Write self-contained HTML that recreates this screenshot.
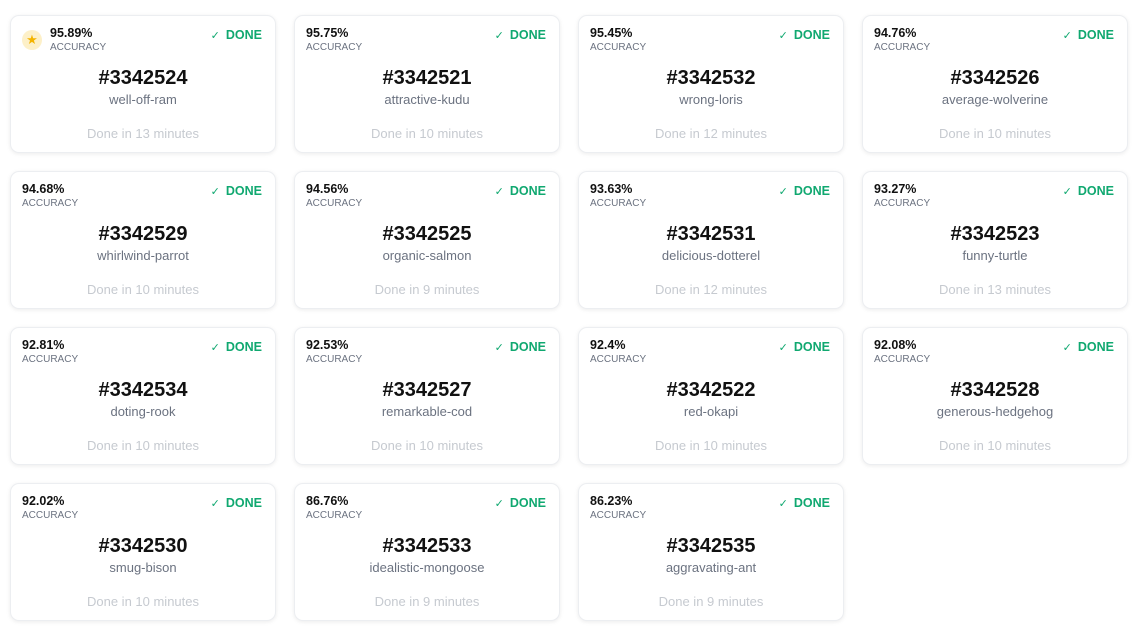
<!DOCTYPE html>
<html><head><style>
body{margin:0;background:#fff;font-family:"Liberation Sans",sans-serif;width:1138px;height:635px;overflow:hidden;position:relative}
.c{position:absolute;width:264px;height:136px;border:1px solid #eceef1;border-radius:9px;background:#fff;box-shadow:0 1px 4px rgba(0,0,0,.08)}
.p{position:absolute;left:11px;top:10px;font-size:12.5px;font-weight:bold;color:#111}
.a{position:absolute;left:11px;top:26px;font-size:10px;color:#6b7280}
.d{position:absolute;right:13px;top:12px;font-size:12.5px;font-weight:bold;color:#10a870}
.d span{font-weight:normal;font-size:11px;margin-right:6px}
.n{position:absolute;left:0;right:0;top:51px;text-align:center;font-size:20px;font-weight:bold;color:#111}
.m{position:absolute;left:0;right:0;top:76px;text-align:center;font-size:13px;color:#6b7280}
.t{position:absolute;left:0;right:0;top:110px;text-align:center;font-size:13px;color:#c6cad0}
.s{position:absolute;left:11px;top:14px;width:20px;height:20px;border-radius:50%;background:#fdf0c8;color:#f4b400;font-size:13px;line-height:20px;text-align:center}
</style></head><body>
<div class="c" style="left:10px;top:15px"><div class="s">★</div><div class="p" style="left:39px">95.89%</div><div class="a" style="left:39px">ACCURACY</div><div class="d"><span>✓</span>DONE</div><div class="n">#3342524</div><div class="m">well-off-ram</div><div class="t">Done in 13 minutes</div></div>
<div class="c" style="left:294px;top:15px"><div class="p">95.75%</div><div class="a">ACCURACY</div><div class="d"><span>✓</span>DONE</div><div class="n">#3342521</div><div class="m">attractive-kudu</div><div class="t">Done in 10 minutes</div></div>
<div class="c" style="left:578px;top:15px"><div class="p">95.45%</div><div class="a">ACCURACY</div><div class="d"><span>✓</span>DONE</div><div class="n">#3342532</div><div class="m">wrong-loris</div><div class="t">Done in 12 minutes</div></div>
<div class="c" style="left:862px;top:15px"><div class="p">94.76%</div><div class="a">ACCURACY</div><div class="d"><span>✓</span>DONE</div><div class="n">#3342526</div><div class="m">average-wolverine</div><div class="t">Done in 10 minutes</div></div>

<div class="c" style="left:10px;top:171px"><div class="p">94.68%</div><div class="a">ACCURACY</div><div class="d"><span>✓</span>DONE</div><div class="n">#3342529</div><div class="m">whirlwind-parrot</div><div class="t">Done in 10 minutes</div></div>
<div class="c" style="left:294px;top:171px"><div class="p">94.56%</div><div class="a">ACCURACY</div><div class="d"><span>✓</span>DONE</div><div class="n">#3342525</div><div class="m">organic-salmon</div><div class="t">Done in 9 minutes</div></div>
<div class="c" style="left:578px;top:171px"><div class="p">93.63%</div><div class="a">ACCURACY</div><div class="d"><span>✓</span>DONE</div><div class="n">#3342531</div><div class="m">delicious-dotterel</div><div class="t">Done in 12 minutes</div></div>
<div class="c" style="left:862px;top:171px"><div class="p">93.27%</div><div class="a">ACCURACY</div><div class="d"><span>✓</span>DONE</div><div class="n">#3342523</div><div class="m">funny-turtle</div><div class="t">Done in 13 minutes</div></div>

<div class="c" style="left:10px;top:327px"><div class="p">92.81%</div><div class="a">ACCURACY</div><div class="d"><span>✓</span>DONE</div><div class="n">#3342534</div><div class="m">doting-rook</div><div class="t">Done in 10 minutes</div></div>
<div class="c" style="left:294px;top:327px"><div class="p">92.53%</div><div class="a">ACCURACY</div><div class="d"><span>✓</span>DONE</div><div class="n">#3342527</div><div class="m">remarkable-cod</div><div class="t">Done in 10 minutes</div></div>
<div class="c" style="left:578px;top:327px"><div class="p">92.4%</div><div class="a">ACCURACY</div><div class="d"><span>✓</span>DONE</div><div class="n">#3342522</div><div class="m">red-okapi</div><div class="t">Done in 10 minutes</div></div>
<div class="c" style="left:862px;top:327px"><div class="p">92.08%</div><div class="a">ACCURACY</div><div class="d"><span>✓</span>DONE</div><div class="n">#3342528</div><div class="m">generous-hedgehog</div><div class="t">Done in 10 minutes</div></div>

<div class="c" style="left:10px;top:483px"><div class="p">92.02%</div><div class="a">ACCURACY</div><div class="d"><span>✓</span>DONE</div><div class="n">#3342530</div><div class="m">smug-bison</div><div class="t">Done in 10 minutes</div></div>
<div class="c" style="left:294px;top:483px"><div class="p">86.76%</div><div class="a">ACCURACY</div><div class="d"><span>✓</span>DONE</div><div class="n">#3342533</div><div class="m">idealistic-mongoose</div><div class="t">Done in 9 minutes</div></div>
<div class="c" style="left:578px;top:483px"><div class="p">86.23%</div><div class="a">ACCURACY</div><div class="d"><span>✓</span>DONE</div><div class="n">#3342535</div><div class="m">aggravating-ant</div><div class="t">Done in 9 minutes</div></div>
</body></html>
